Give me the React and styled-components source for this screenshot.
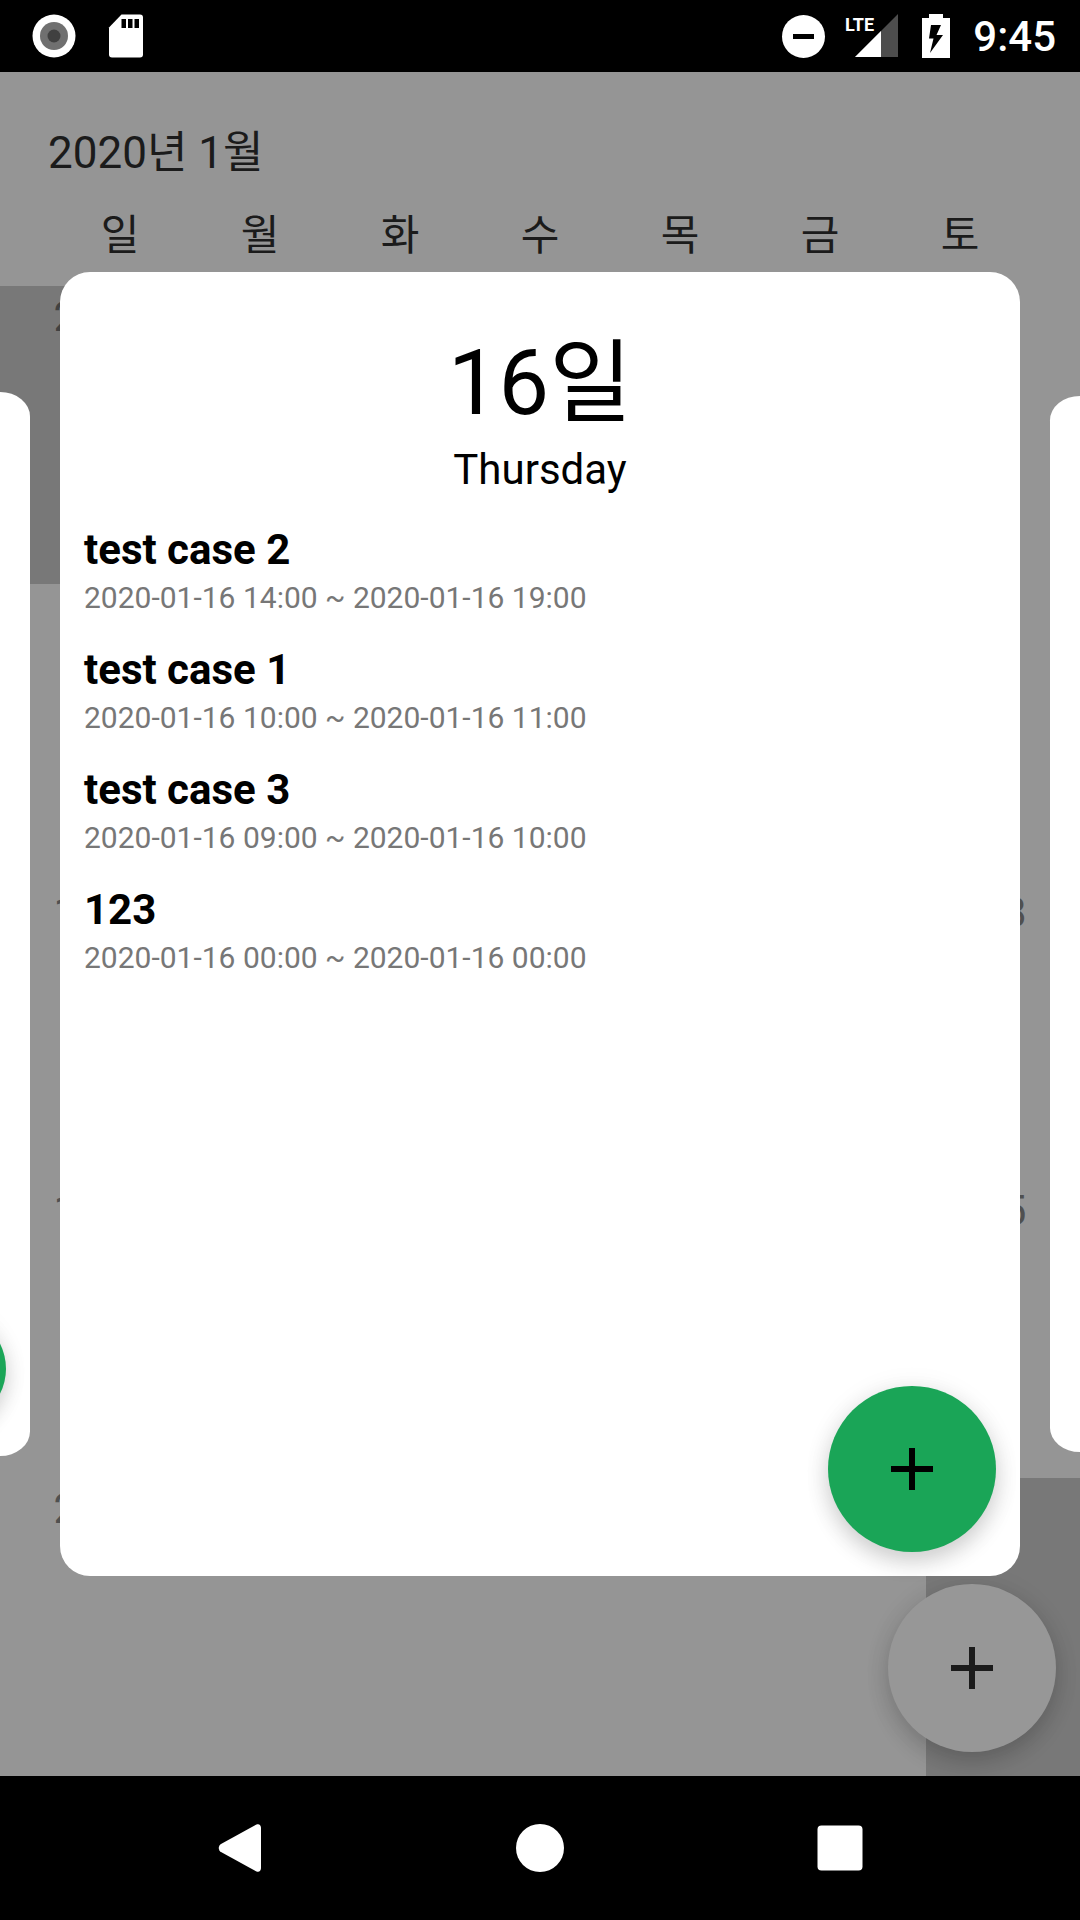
import React from "react";
import styled, { createGlobalStyle } from "styled-components";

const GlobalStyle = createGlobalStyle`
  *, *::before, *::after { box-sizing: border-box; }
  body {
    margin: 0;
    background: #000;
    font-family: Roboto, "Noto Sans CJK KR", sans-serif;
    color: #000;
  }
  h1, h2, h3, p, ul { margin: 0; padding: 0; }
`;

const Screen = styled.div`
  display: flex;
  flex-direction: column;
  min-height: 100vh;
`;

const StatusBar = styled.header`
  display: flex;
  justify-content: space-between;
  align-items: center;
  height: 72px;
  padding: 0 24px 0 30px;
  background: #000;
  color: #fff;
`;

const StatusGroup = styled.div`
  display: flex;
  align-items: center;
  gap: ${(p) => p.$gap}px;
`;

const StatusIcon = styled.svg`
  display: block;
  width: ${(p) => p.$width}px;
  height: 48px;
`;

const Clock = styled.time`
  padding-top: 2px;
  font-size: 42px;
  font-weight: 500;
  line-height: 56px;
`;

const Main = styled.main`
  position: relative;
  flex: 1;
  display: flex;
  flex-direction: column;
  overflow: hidden;
  background: #959595;
`;

const MonthTitle = styled.h1`
  padding: 51px 48px 25px;
  font-size: 44px;
  font-weight: 400;
  line-height: 60px;
  color: #1b1b1b;
`;

const Weekdays = styled.div`
  display: grid;
  grid-template-columns: repeat(7, 1fr);
  padding: 0 50px 22px;
`;

const Weekday = styled.span`
  text-align: center;
  font-size: 42px;
  line-height: 56px;
  color: #1b1b1b;
`;

const MonthGrid = styled.div`
  flex: 1;
  display: grid;
  grid-template-columns: repeat(7, 1fr);
  grid-auto-rows: 1fr;
`;

const Day = styled.div`
  padding-top: 3px;
  text-align: center;
  font-size: 42px;
  line-height: 56px;
  color: ${(p) => (p.$outside ? "#414141" : "#505050")};
  background: ${(p) => (p.$outside ? "#787878" : "transparent")};
`;

const AddButton = styled.button`
  display: flex;
  align-items: center;
  justify-content: center;
  width: 168px;
  height: ${(p) => p.$height}px;
  padding: 0;
  border: 0;
  border-radius: 50%;
  background: ${(p) => p.$color};
  color: ${(p) => p.$ink};
  box-shadow: 0 10px 22px rgba(0, 0, 0, 0.16), 0 2px 28px rgba(0, 0, 0, 0.07);
`;

const PageAction = styled.div`
  position: absolute;
  right: 24px;
  bottom: 24px;
`;

const Carousel = styled.div`
  position: absolute;
  inset: 0;
  display: flex;
  justify-content: center;
  gap: 30px;
  padding: 200px 0;
  overflow: hidden;
  pointer-events: none;
`;

const Card = styled.section`
  flex: 0 0 calc(100% - 120px);
  display: flex;
  flex-direction: column;
  padding: 54px 24px 24px;
  border-radius: 30px;
  background: #fff;
  transform: scaleY(${(p) => p.$scale});
  pointer-events: auto;
`;

const CardDay = styled.h2`
  text-align: center;
  font-size: 90px;
  font-weight: 400;
  line-height: 116px;
`;

const CardWeekday = styled.p`
  text-align: center;
  font-size: 42px;
  line-height: 56px;
`;

const EventList = styled.ul`
  display: flex;
  flex-direction: column;
  gap: 24px;
  padding-top: 24px;
  list-style: none;
`;

const EventTitle = styled.h3`
  font-size: 42px;
  font-weight: 700;
  line-height: 56px;
`;

const EventTime = styled.p`
  font-size: 30px;
  line-height: 40px;
  color: #777;
`;

const CardAction = styled.div`
  margin-top: auto;
  align-self: flex-end;
`;

const NavBar = styled.nav`
  display: flex;
  height: 144px;
  padding: 0 90px;
  background: #000;
`;

const NavButton = styled.button`
  flex: 1;
  display: flex;
  align-items: center;
  justify-content: center;
  padding: 0;
  border: 0;
  background: none;
  color: #fff;
`;

const WEEKDAYS = ["일", "월", "화", "수", "목", "금", "토"];

// Only the days that show beside the open card carry a number.
const DAY_LABELS = { 0: 29, 14: 12, 20: 18, 21: 19, 27: 25, 28: 26 };

const DAYS = Array.from({ length: 35 }, (_, i) => ({
  key: i,
  label: DAY_LABELS[i],
  outside: i < 3 || i === 34,
}));

const EVENTS = [
  { title: "test case 2", time: "2020-01-16 14:00 ~ 2020-01-16 19:00" },
  { title: "test case 1", time: "2020-01-16 10:00 ~ 2020-01-16 11:00" },
  { title: "test case 3", time: "2020-01-16 09:00 ~ 2020-01-16 10:00" },
  { title: "123", time: "2020-01-16 00:00 ~ 2020-01-16 00:00" },
];

function PlusIcon() {
  return (
    <svg width="42" height="42" viewBox="0 0 42 42" fill="currentColor" aria-hidden="true">
      <path d="M18 0h6v18h18v6H24v18h-6V24H0v-6h18z" />
    </svg>
  );
}

function Status() {
  return (
    <StatusBar>
      <StatusGroup $gap={24}>
        <StatusIcon $width={48} viewBox="0 0 48 48" aria-hidden="true">
          <circle cx="24" cy="24" r="21.5" fill="#fff" />
          <circle cx="24" cy="24" r="14" fill="#707070" />
          <circle cx="24" cy="24" r="6.5" fill="#404040" />
        </StatusIcon>
        <StatusIcon $width={48} viewBox="0 0 48 48" aria-hidden="true">
          <path
            fill="#fff"
            d="M19.5 2.5H38a3 3 0 0 1 3 3v37a3 3 0 0 1-3 3H10a3 3 0 0 1-3-3V15.5z"
          />
          <path d="M19.5 7h4.5v9h-4.5zM26 7h4.500v9H26zM32.5 7H37v9h-4.5z" />
        </StatusIcon>
      </StatusGroup>
      <StatusGroup $gap={18}>
        <StatusIcon $width={48} viewBox="0 0 48 48" aria-hidden="true">
          <circle cx="24.5" cy="24.5" r="21.5" fill="#fff" />
          <path d="M14 22h21v5H14z" />
        </StatusIcon>
        <StatusIcon $width={56} viewBox="0 0 56 48" role="img" aria-label="LTE signal">
          <path d="M53 2v43H10z" fill="#4d4d4d" />
          <path d="M36 19v26H10z" fill="#fff" />
          <text x="0" y="19" fontSize="18" fontWeight="700" fill="#fff">
            LTE
          </text>
        </StatusIcon>
        <StatusIcon $width={36} viewBox="0 0 36 48" aria-hidden="true">
          <path d="M10 2h14v4h7v40H3V6h7z" fill="#fff" />
          <path d="M12 13h10l-4.500 10H24L11 41l3.500-14.500H10z" />
        </StatusIcon>
        <Clock>9:45</Clock>
      </StatusGroup>
    </StatusBar>
  );
}

function NeighbourCard({ scale }) {
  return (
    <Card $scale={scale} aria-hidden="true">
      <CardAction>
        <AddButton $color="#1aa557" $ink="#000" $height={166} tabIndex={-1}>
          <PlusIcon />
        </AddButton>
      </CardAction>
    </Card>
  );
}

export default function App() {
  return (
    <Screen>
      <GlobalStyle />
      <Status />
      <Main>
        <MonthTitle>2020년 1월</MonthTitle>
        <Weekdays>
          {WEEKDAYS.map((day) => (
            <Weekday key={day}>{day}</Weekday>
          ))}
        </Weekdays>
        <MonthGrid>
          {DAYS.map((day) => (
            <Day key={day.key} $outside={day.outside}>
              {day.label}
            </Day>
          ))}
        </MonthGrid>
        <PageAction>
          <AddButton $color="#979797" $ink="#1b1b1b" $height={168} aria-label="Add schedule">
            <PlusIcon />
          </AddButton>
        </PageAction>
        <Carousel>
          <NeighbourCard scale={0.816} />
          <Card $scale={1}>
            <CardDay>16일</CardDay>
            <CardWeekday>Thursday</CardWeekday>
            <EventList>
              {EVENTS.map((event) => (
                <li key={event.title}>
                  <EventTitle>{event.title}</EventTitle>
                  <EventTime>{event.time}</EventTime>
                </li>
              ))}
            </EventList>
            <CardAction>
              <AddButton
                $color="#1aa557"
                $ink="#000"
                $height={166}
                aria-label="Add event on the 16th"
              >
                <PlusIcon />
              </AddButton>
            </CardAction>
          </Card>
          <NeighbourCard scale={0.81} />
        </Carousel>
      </Main>
      <NavBar>
        <NavButton aria-label="Back">
          <svg width="48" height="48" viewBox="0 0 48 48" fill="currentColor" aria-hidden="true">
            <path d="M40.500 .5C43 -.5 45 1 45 4v40c0 3-2 4.500-4.500 3.500L5 28c-3-2-3-6 0-8z" />
          </svg>
        </NavButton>
        <NavButton aria-label="Home">
          <svg width="48" height="48" viewBox="0 0 48 48" fill="currentColor" aria-hidden="true">
            <circle cx="24" cy="24" r="24" />
          </svg>
        </NavButton>
        <NavButton aria-label="Recent apps">
          <svg width="48" height="48" viewBox="0 0 48 48" fill="currentColor" aria-hidden="true">
            <rect x="1.500" y="1.500" width="45" height="45" rx="4" />
          </svg>
        </NavButton>
      </NavBar>
    </Screen>
  );
}
